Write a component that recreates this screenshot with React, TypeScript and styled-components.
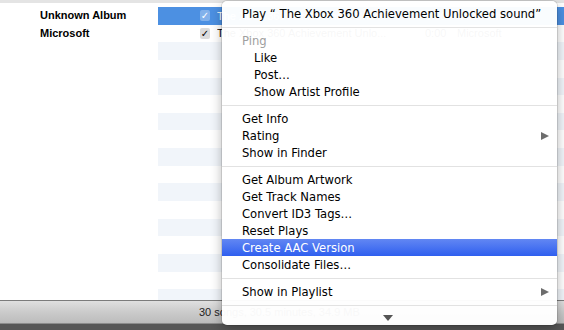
import React from "react";
import styled, { createGlobalStyle } from "styled-components";

const GlobalStyle = createGlobalStyle`
  html, body {
    margin: 0;
    padding: 0;
    background: #fff;
  }
  body {
    font-family: "Liberation Sans", Arial, sans-serif;
  }
`;

const ROW_H = 17.65;

const Window = styled.div`
  position: relative;
  width: 564px;
  height: 330px;
  overflow: hidden;
  display: flex;
  flex-direction: column;
  background: #fff;
`;

const HeaderEdge = styled.div`
  flex-shrink: 0;
  height: 7px;
  border-top: 3px solid #e4e4e4;
  box-sizing: border-box;
`;

const List = styled.div`
  flex: 1;
  overflow: hidden;
  display: flex;
  flex-direction: column;
`;

const Row = styled.div`
  flex-shrink: 0;
  height: ${ROW_H}px;
  display: grid;
  grid-template-columns: 158px 1fr;
`;

const AlbumCell = styled.div`
  padding-left: 40px;
  font-weight: bold;
  font-size: 11px;
  line-height: ${ROW_H}px;
  color: #000;
  white-space: nowrap;
`;

type Tone = "selected" | "stripe" | "plain";

const toneBg: Record<Tone, string> = {
  selected: "#4c90e2",
  stripe: "#f1f5fa",
  plain: "#fff",
};

const TrackCell = styled.div<{ $tone: Tone }>`
  display: flex;
  align-items: center;
  padding-left: 42px;
  background: ${(p) => toneBg[p.$tone]};
  color: ${(p) => (p.$tone === "selected" ? "#fff" : "#000")};
  font-size: 11px;
  white-space: nowrap;
`;

const Check = styled.span<{ $selected?: boolean }>`
  width: 10px;
  height: 11px;
  border-radius: 2px;
  background: ${(p) => (p.$selected ? "rgba(255,255,255,0.3)" : "#dcdcdc")};
  color: ${(p) => (p.$selected ? "#fff" : "#000")};
  font-family: "DejaVu Sans", sans-serif;
  font-size: 10px;
  line-height: 11px;
  text-align: center;
  font-weight: bold;
`;

const Title = styled.span`
  width: 208px;
  margin-left: 7px;
  overflow: hidden;
`;

const Time = styled.span`
  width: 32px;
`;

const StatusBar = styled.div`
  flex-shrink: 0;
  height: 24px;
  box-sizing: border-box;
  border-top: 1px solid #7c7c7c;
  border-bottom: 1px solid #8c8c8c;
  background: linear-gradient(#e0e0e0, #cbcbcb 50%, #bcbcbc);
  padding-left: 199px;
  font-size: 11px;
  line-height: 22px;
  color: #222;
`;

const BottomEdge = styled.div`
  flex-shrink: 0;
  height: 6px;
  background: #575757;
`;

const Menu = styled.div`
  position: absolute;
  left: 222px;
  top: 1px;
  width: 335px;
  height: 324px;
  box-sizing: border-box;
  padding-top: 4px;
  border-radius: 5px;
  background: rgba(255, 255, 255, 0.97);
  box-shadow: 0 0 0 1px rgba(0, 0, 0, 0.1), 0 4px 12px rgba(0, 0, 0, 0.3);
  display: flex;
  flex-direction: column;
  font-family: "DejaVu Sans", "Lucida Grande", sans-serif;
  font-size: 11.6px;
  overflow: hidden;
`;

const Item = styled.div<{ $indent?: boolean; $disabled?: boolean; $active?: boolean }>`
  height: 17px;
  display: flex;
  align-items: center;
  justify-content: space-between;
  padding-left: ${(p) => (p.$indent ? 32 : 20)}px;
  padding-right: 8px;
  color: ${(p) => (p.$disabled ? "#a0a0a0" : p.$active ? "#fff" : "#000")};
  background: ${(p) => (p.$active ? "linear-gradient(#6287f3, #2f5fef)" : "transparent")};
  white-space: nowrap;
`;

const Separator = styled.div`
  height: 10px;
  display: flex;
  align-items: center;
  &::after {
    content: "";
    flex: 1;
    height: 1px;
    background: #e2e2e2;
  }
`;

const SubArrow = styled.span`
  width: 0;
  height: 0;
  border-top: 4px solid transparent;
  border-bottom: 4px solid transparent;
  border-left: 8px solid #6d6d6d;
`;

const Scroller = styled.div`
  flex: 1;
  display: flex;
  align-items: center;
  justify-content: center;
  padding-right: 4px;
  &::after {
    content: "";
    border-left: 5px solid transparent;
    border-right: 5px solid transparent;
    border-top: 6px solid #555;
  }
`;

type Entry =
  | { kind: "sep" }
  | { kind: "item"; label: string; indent?: boolean; disabled?: boolean; active?: boolean; sub?: boolean };

const entries: Entry[] = [
  { kind: "item", label: "Play \u201c The Xbox 360 Achievement Unlocked sound\u201d" },
  { kind: "sep" },
  { kind: "item", label: "Ping", disabled: true },
  { kind: "item", label: "Like", indent: true },
  { kind: "item", label: "Post\u2026", indent: true },
  { kind: "item", label: "Show Artist Profile", indent: true },
  { kind: "sep" },
  { kind: "item", label: "Get Info" },
  { kind: "item", label: "Rating", sub: true },
  { kind: "item", label: "Show in Finder" },
  { kind: "sep" },
  { kind: "item", label: "Get Album Artwork" },
  { kind: "item", label: "Get Track Names" },
  { kind: "item", label: "Convert ID3 Tags\u2026" },
  { kind: "item", label: "Reset Plays" },
  { kind: "item", label: "Create AAC Version", active: true },
  { kind: "item", label: "Consolidate Files\u2026" },
  { kind: "sep" },
  { kind: "item", label: "Show in Playlist", sub: true },
  { kind: "sep" },
];

const ROWS = 17;

export default function App() {
  const rows = Array.from({ length: ROWS }, (_, i) => i);
  return (
    <>
      <GlobalStyle />
      <Window>
        <HeaderEdge />
        <List>
          {rows.map((i) => {
            const tone: Tone = i === 0 ? "selected" : i >= 2 && i % 2 === 0 ? "stripe" : "plain";
            return (
              <Row key={i}>
                <AlbumCell>{i === 0 ? "Unknown Album" : i === 1 ? "Microsoft" : ""}</AlbumCell>
                <TrackCell $tone={tone}>
                  {i < 2 && (
                    <>
                      <Check $selected={i === 0}>✓</Check>
                      <Title>The Xbox 360 Achievement Unlo...</Title>
                      <Time>0:00</Time>
                      <span>Microsoft</span>
                    </>
                  )}
                </TrackCell>
              </Row>
            );
          })}
        </List>
        <StatusBar>30 songs, 30.5 minutes, 34.9 MB</StatusBar>
        <BottomEdge />

        <Menu>
          {entries.map((e, idx) =>
            e.kind === "sep" ? (
              <Separator key={idx} />
            ) : (
              <Item key={idx} $indent={e.indent} $disabled={e.disabled} $active={e.active}>
                <span>{e.label}</span>
                {e.sub && <SubArrow />}
              </Item>
            )
          )}
          <Scroller />
        </Menu>
      </Window>
    </>
  );
}
